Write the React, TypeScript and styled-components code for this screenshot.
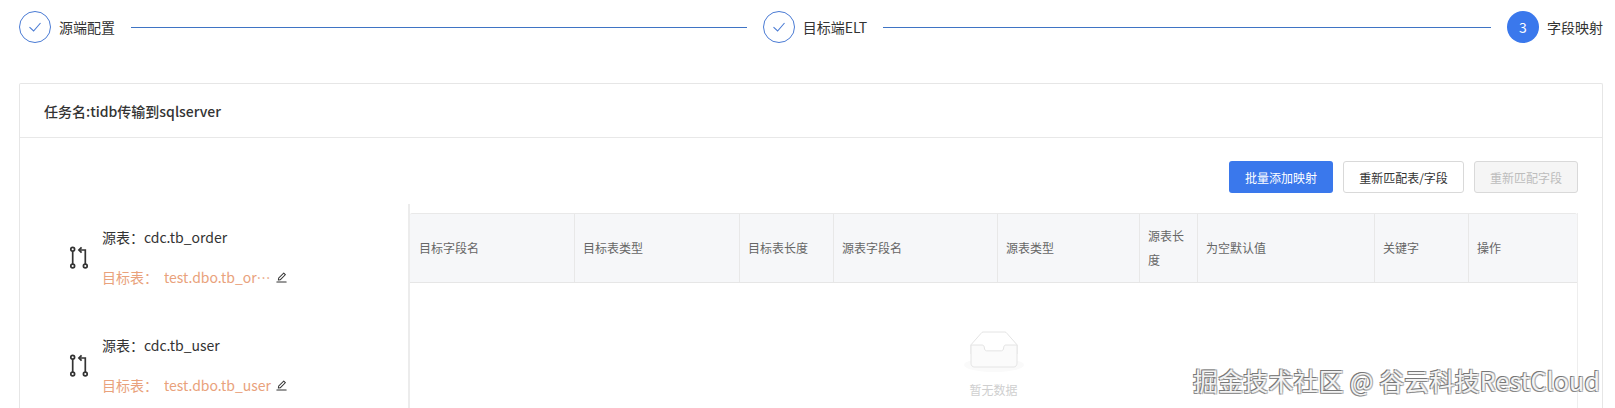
import * as React from 'react';
import styled, { createGlobalStyle } from 'styled-components';
import { AiOutlineEdit } from 'react-icons/ai';

const GlobalStyle = createGlobalStyle`
    html, body {
        margin: 0;
        padding: 0;
        background: #fff;
        height: 408px;
        overflow: hidden;
    }
    body {
        font-family: "Noto Sans CJK SC", "Noto Sans", sans-serif;
        color: #333;
    }
    * { box-sizing: border-box; }
`;

const columns = [
    { title: '目标字段名', width: 165 },
    { title: '目标表类型', width: 165 },
    { title: '目标表长度', width: 94 },
    { title: '源表字段名', width: 164 },
    { title: '源表类型', width: 142 },
    { title: '源表长度', width: 58 },
    { title: '为空默认值', width: 177 },
    { title: '关键字', width: 94 },
    { title: '操作', width: 108 },
];

const mappings = [
    { source: 'cdc.tb_order', target: 'test.dbo.tb_order' },
    { source: 'cdc.tb_user', target: 'test.dbo.tb_user' },
];

function CheckIcon() {
    return (
        <svg width="14" height="14" viewBox="0 0 14 14" fill="none" stroke="#4a7bd4" strokeWidth="1.1">
            <path d="M1.5 7.2 L5.6 11 L12.5 3" />
        </svg>
    );
}

function MappingIcon() {
    return (
        <svg width="20" height="24" viewBox="0 0 20 24" fill="none" stroke="#333" strokeWidth="1.7">
            <circle cx="3.7" cy="4.3" r="1.9" />
            <circle cx="3.7" cy="21" r="1.9" />
            <circle cx="16.3" cy="21" r="1.9" />
            <path d="M3.7 6.2 V19.1" />
            <path d="M16.3 19.1 V5 H10" />
            <path d="M12.6 2.3 L9.9 5 L12.6 7.7" />
        </svg>
    );
}

function EmptyIcon() {
    return (
        <svg width="64" height="41" viewBox="0 0 64 41">
            <g transform="translate(0 1)" fill="none" fillRule="evenodd">
                <ellipse fill="#fafafa" cx="32" cy="33" rx="30" ry="7" />
                <g fillRule="nonzero" stroke="#e4e4e4">
                    <path d="M55 12.76L44.854 1.258C44.367.474 43.656 0 42.907 0H21.093c-.749 0-1.46.474-1.947 1.257L9 12.761V22h46v-9.24z" />
                    <path
                        d="M41.613 15.931c0-1.605.994-2.93 2.227-2.931H55v18.137C55 33.26 53.68 35 52.05 35h-40.1C10.32 35 9 33.259 9 31.137V13h11.16c1.233 0 2.227 1.323 2.227 2.928v.022c0 1.605 1.005 2.901 2.237 2.901h14.752c1.232 0 2.237-1.308 2.237-2.913v-.007z"
                        fill="#fbfbfb"
                    />
                </g>
            </g>
        </svg>
    );
}

export default function App() {
    return (
        <Page>
            <GlobalStyle />
            <Stepper>
                <Step>
                    <DoneCircle><CheckIcon /></DoneCircle>
                    <StepLabel>源端配置</StepLabel>
                </Step>
                <StepLine $grow={616} />
                <Step>
                    <DoneCircle><CheckIcon /></DoneCircle>
                    <StepLabel>目标端ELT</StepLabel>
                </Step>
                <StepLine $grow={608} />
                <Step>
                    <ActiveCircle>3</ActiveCircle>
                    <StepLabel>字段映射</StepLabel>
                </Step>
            </Stepper>
            <Card>
                <CardHeader>任务名:tidb传输到sqlserver</CardHeader>
                <CardBody>
                    <Toolbar>
                        <PrimaryButton>批量添加映射</PrimaryButton>
                        <DefaultButton>重新匹配表/字段</DefaultButton>
                        <DisabledButton>重新匹配字段</DisabledButton>
                    </Toolbar>
                    <Content>
                        <MappingList>
                            {mappings.map((m) => (
                                <MappingRow key={m.source}>
                                    <MappingIcon />
                                    <MappingText>
                                        <SourceLine>源表：{m.source}</SourceLine>
                                        <TargetLine>
                                            <span>目标表：</span>
                                            <TargetName>{m.target}</TargetName>
                                            <EditMark><AiOutlineEdit /></EditMark>
                                        </TargetLine>
                                    </MappingText>
                                </MappingRow>
                            ))}
                        </MappingList>
                        <TablePanel>
                            <Table>
                                <HeadRow>
                                    {columns.map((c) => (
                                        <HeadCell key={c.title} $width={c.width}>{c.title}</HeadCell>
                                    ))}
                                </HeadRow>
                                <Empty>
                                    <EmptyIcon />
                                    <EmptyText>暂无数据</EmptyText>
                                </Empty>
                            </Table>
                        </TablePanel>
                    </Content>
                </CardBody>
            </Card>
            <Watermark>掘金技术社区 @ 谷云科技RestCloud</Watermark>
        </Page>
    );
}

const Page = styled.div`
    position: relative;
    width: 1615px;
    height: 408px;
    padding: 11px 12px 0 19px;
    overflow: hidden;
`;

const Stepper = styled.div`
    display: flex;
    align-items: center;
    height: 32px;
`;

const Step = styled.div`
    display: flex;
    align-items: center;
    gap: 8px;
`;

const DoneCircle = styled.div`
    width: 32px;
    height: 32px;
    border-radius: 50%;
    border: 1px solid #4a7bd4;
    display: flex;
    align-items: center;
    justify-content: center;
`;

const ActiveCircle = styled.div`
    width: 32px;
    height: 32px;
    border-radius: 50%;
    background: #3a78ec;
    color: #fff;
    font-size: 14px;
    display: flex;
    align-items: center;
    justify-content: center;
`;

const StepLabel = styled.div`
    font-size: 14px;
    line-height: 22px;
    color: #333;
`;

const StepLine = styled.div<{ $grow: number }>`
    flex: ${(p) => p.$grow} 1 0;
    height: 1px;
    background: #3f74c4;
    margin: 0 16px;
`;

const Card = styled.div`
    margin-top: 40px;
    border: 1px solid #e6e6e6;
    border-bottom: none;
    border-radius: 2px 2px 0 0;
    height: 400px;
`;

const CardHeader = styled.div`
    height: 54px;
    padding-left: 24px;
    display: flex;
    align-items: center;
    font-size: 14px;
    font-weight: 500;
    color: #333;
    border-bottom: 1px solid #e8e8e8;
`;

const CardBody = styled.div`
    padding-top: 23px;
`;

const Toolbar = styled.div`
    display: flex;
    justify-content: flex-end;
    gap: 10px;
    padding-right: 24px;
`;

const ToolButton = styled.div`
    height: 32px;
    border-radius: 3px;
    font-size: 12px;
    display: flex;
    align-items: center;
    justify-content: center;
`;

const PrimaryButton = styled(ToolButton)`
    width: 104px;
    background: #3a78ec;
    color: #fff;
`;

const DefaultButton = styled(ToolButton)`
    width: 121px;
    background: #fff;
    border: 1px solid #d9d9d9;
    color: #333;
`;

const DisabledButton = styled(ToolButton)`
    width: 104px;
    background: #f5f5f5;
    border: 1px solid #d9d9d9;
    color: #bdbdbd;
`;

const Content = styled.div`
    display: flex;
    margin-top: 11px;
`;

const MappingList = styled.div`
    width: 390px;
    height: 210px;
    padding: 22px 0 0 49px;
    display: flex;
    flex-direction: column;
    gap: 46px;
    border-right: 2px solid #ececec;
`;

const MappingRow = styled.div`
    display: flex;
    align-items: center;
    gap: 13px;
    height: 62px;
`;

const MappingText = styled.div`
    display: flex;
    flex-direction: column;
    gap: 18px;
`;

const SourceLine = styled.div`
    font-size: 14px;
    line-height: 22px;
    color: #333;
`;

const TargetLine = styled.div`
    display: flex;
    align-items: center;
    font-size: 14px;
    line-height: 22px;
    color: #e9a27c;
`;

const TargetName = styled.span`
    display: inline-block;
    width: 108px;
    margin-left: 6px;
    overflow: hidden;
    white-space: nowrap;
    text-overflow: ellipsis;
`;

const EditMark = styled.span`
    display: flex;
    margin-left: 3px;
    font-size: 13px;
    color: #333;
`;

const TablePanel = styled.div`
    padding-top: 9px;
    flex: none;
`;

const Table = styled.div`
    width: 1168px;
    height: 200px;
    border-right: 1px solid #eee;
`;

const HeadRow = styled.div`
    display: flex;
    height: 70px;
    background: #f6f7f9;
    border-top: 1px solid #e9e9e9;
    border-bottom: 1px solid #e6e6e6;
    border-radius: 2px 2px 0 0;
`;

const HeadCell = styled.div<{ $width: number }>`
    width: ${(p) => p.$width}px;
    flex: none;
    padding: 0 8px 0 8px;
    display: flex;
    align-items: center;
    font-size: 12px;
    line-height: 24px;
    color: #666;
    border-right: 1px solid #e8e8e8;

    &:first-child {
        padding-left: 9px;
    }

    &:last-child {
        border-right: none;
    }
`;

const Empty = styled.div`
    display: flex;
    flex-direction: column;
    align-items: center;
    padding-top: 48px;
`;

const EmptyText = styled.div`
    margin-top: 8px;
    font-size: 12px;
    line-height: 20px;
    color: #cfcfcf;
`;

const Watermark = styled.div`
    position: absolute;
    left: 1193px;
    top: 362px;
    font-size: 25px;
    line-height: 36px;
    letter-spacing: 0.15px;
    white-space: nowrap;
    color: #f4f4f4;
    text-shadow: -1px -1px 0 #777, 1px -1px 0 #aaa, -1px 1px 0 #888, 1px 1px 0 #bbb;
`;
